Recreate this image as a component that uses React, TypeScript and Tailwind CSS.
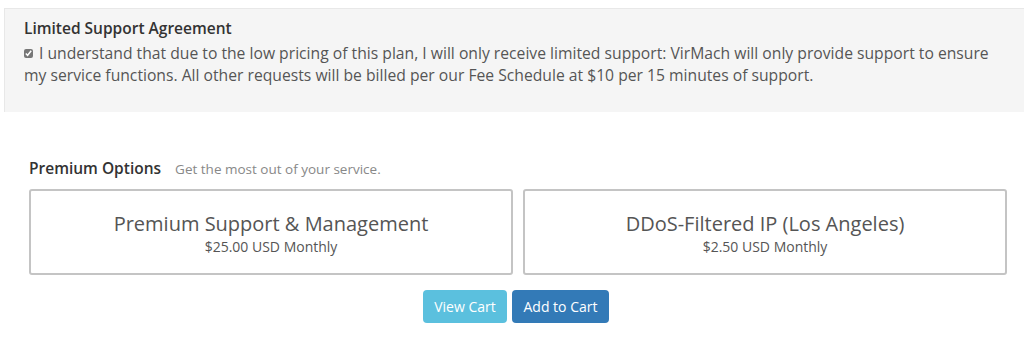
export default function App() {
  const options = [
    { name: "Premium Support & Management", price: "$25.00 USD Monthly" },
    { name: "DDoS-Filtered IP (Los Angeles)", price: "$2.50 USD Monthly" },
  ];

  return (
    <div className="w-[1024px] h-[349px] bg-white overflow-hidden font-['Open_Sans',sans-serif] text-[#555]">
      {/* Agreement panel */}
      <div className="mt-[8px] ml-[4px] h-[104px] bg-[#f5f5f5] border-t border-l border-[#e8e8e8] pl-[19px] pt-[9px]">
        <h3 className="text-[15.5px] font-semibold text-[#333] leading-[21px]">Limited Support Agreement</h3>
        <p className="mt-[3px] text-[15.7px] leading-[22px] text-[#555] pr-[30px]">
          <input type="checkbox" defaultChecked className="w-[9px] h-[9px] mr-[6px] align-[1px] accent-[#777]" />
          I understand that due to the low pricing of this plan, I will only receive limited support: VirMach will only provide support to ensure my service functions. All other requests will be billed per our Fee Schedule at $10 per 15 minutes of support.
        </p>
      </div>

      {/* Premium options */}
      <div className="ml-[29px] mr-[17px] mt-[46px]">
        <div className="flex items-baseline gap-[14px] leading-[20px]">
          <span className="text-[15.5px] font-semibold text-[#333]">Premium Options</span>
          <span className="text-[13.5px] text-[#888]">Get the most out of your service.</span>
        </div>
        <div className="mt-[10px] grid grid-cols-2 gap-[10px]">
          {options.map((o) => (
            <div
              key={o.name}
              className="h-[86px] border-2 border-[#c4c4c4] rounded-[3px] flex flex-col items-center justify-center pt-[2px]"
            >
              <div className="text-[20px] leading-[26px] text-[#555]">{o.name}</div>
              <div className="text-[14px] leading-[19px] text-[#555]">{o.price}</div>
            </div>
          ))}
        </div>
        <div className="mt-[15px] flex justify-center gap-[5px] pr-[4px]">
          <button className="h-[33px] w-[84px] px-0 whitespace-nowrap rounded-[4px] bg-[#5bc0de] text-white text-[14px]">View Cart</button>
          <button className="h-[33px] w-[97px] px-0 whitespace-nowrap rounded-[4px] bg-[#337ab7] text-white text-[14px]">Add to Cart</button>
        </div>
      </div>
    </div>
  );
}
